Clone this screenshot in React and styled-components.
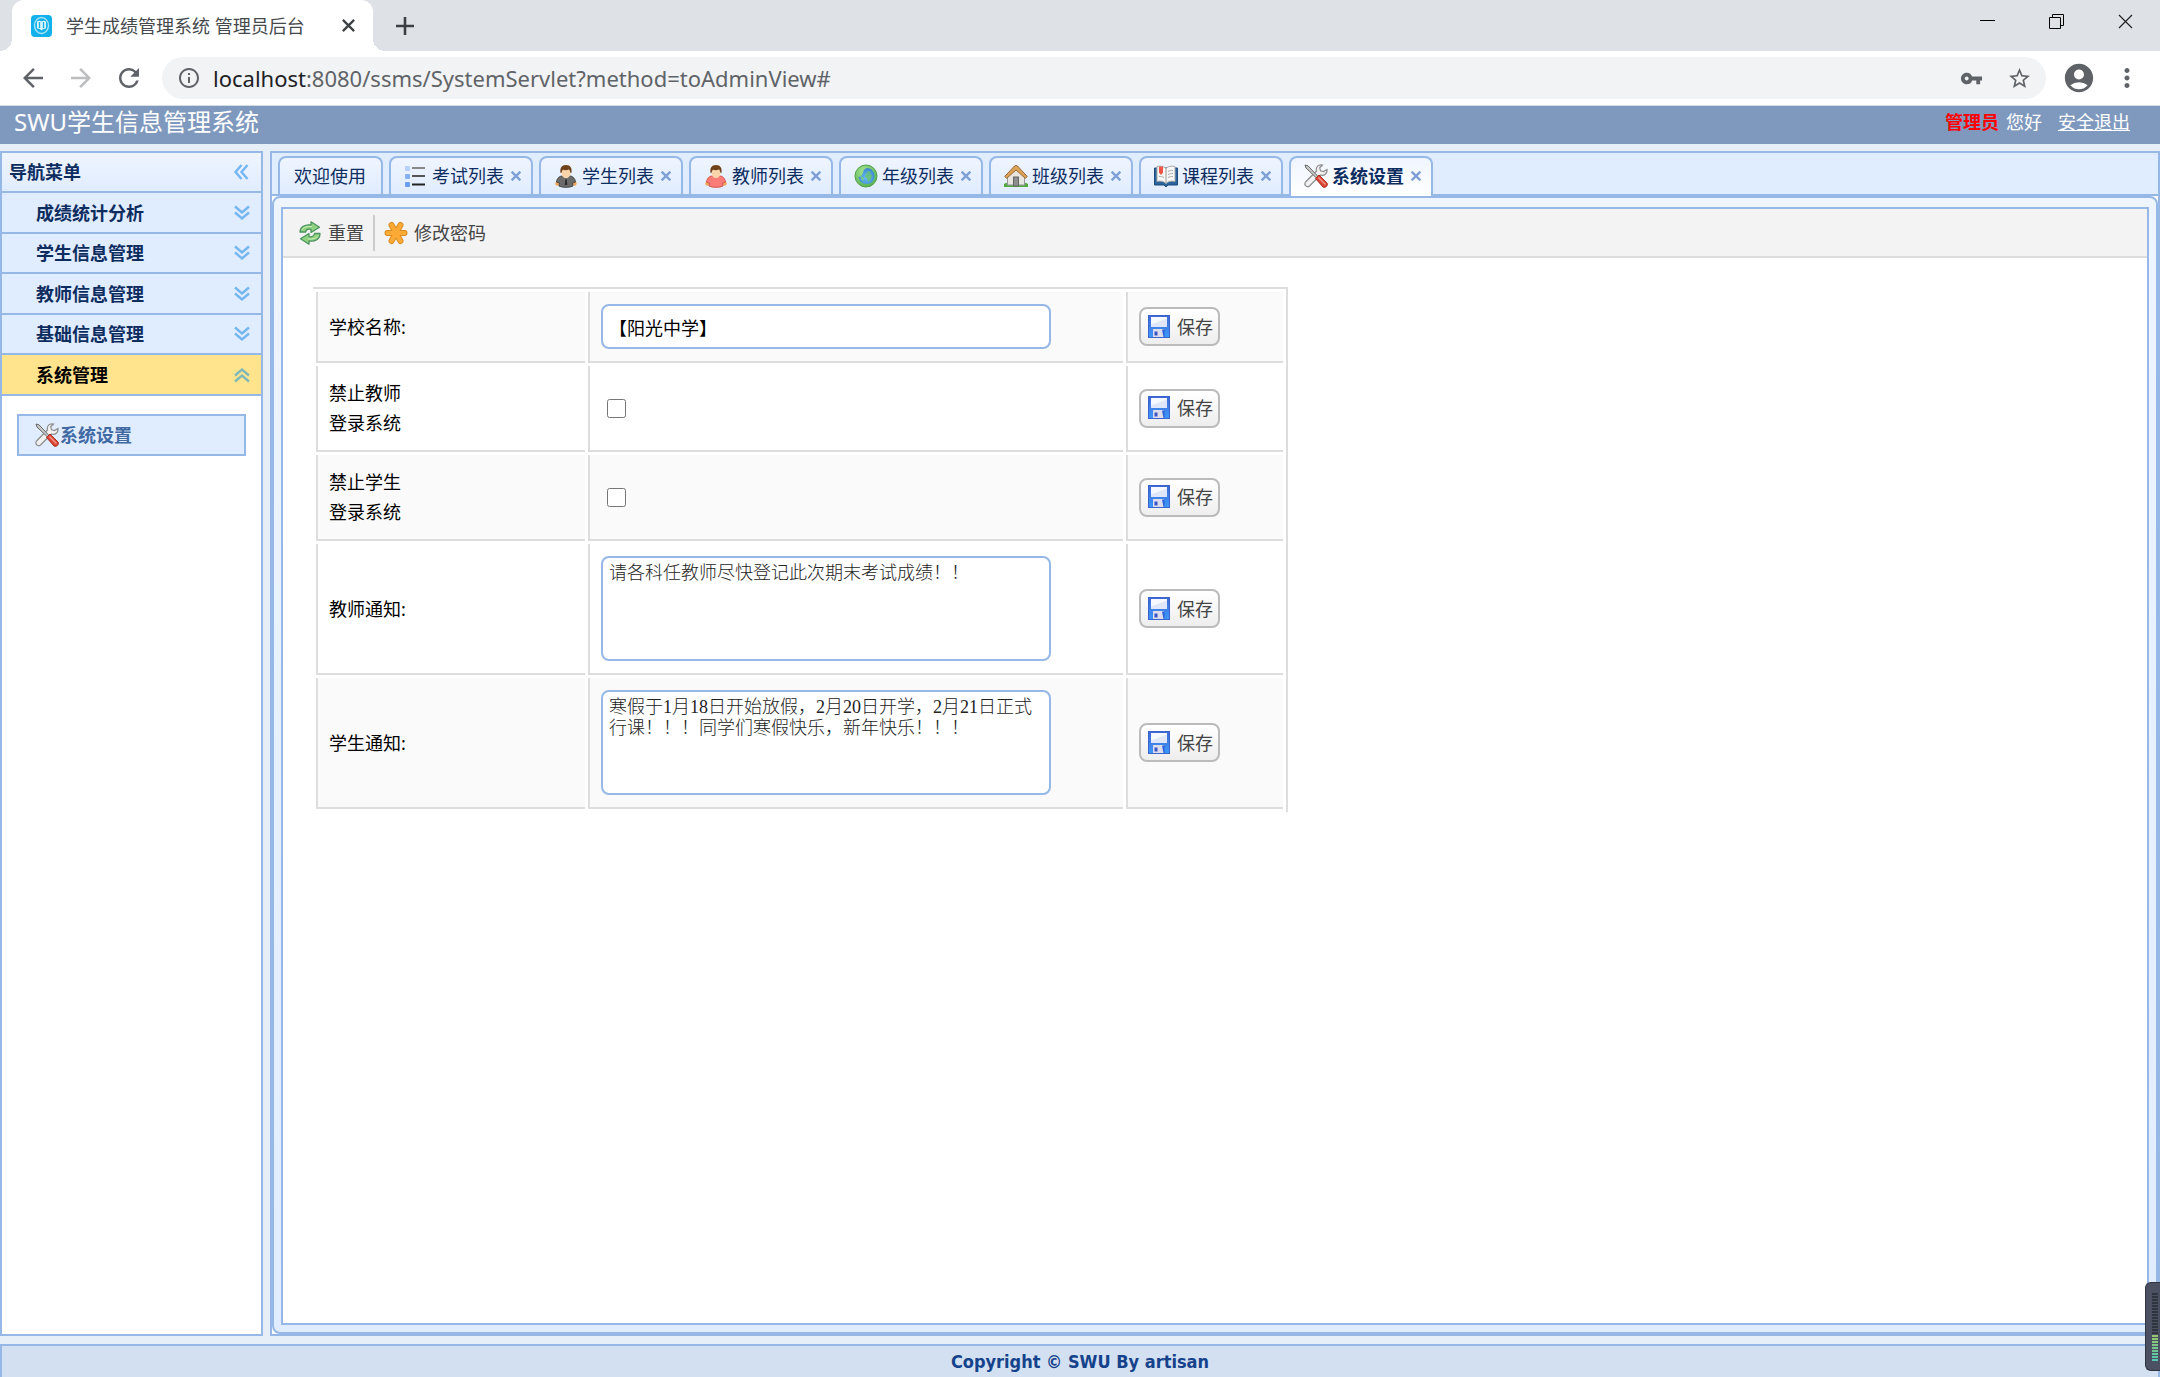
import styled, { createGlobalStyle, css } from "styled-components";
import {
  MdAccountCircle,
  MdArrowBack,
  MdArrowForward,
  MdInfoOutline,
  MdMoreVert,
  MdRefresh,
  MdStarBorder,
  MdVpnKey,
} from "react-icons/md";

const GlobalStyle = createGlobalStyle`
  :root {
    --line: #95b8e7;
    --blue-bg: #e0ecff;
    --blue-top: #eff5ff;
    --navy: #0e2d5f;
    --grey-line: #dddddd;
    --chrome-icon: #5f6368;
  }
  *, *::before, *::after {
    box-sizing: border-box;
  }
  body {
    margin: 0;
    font: 18px/24px "Noto Sans", "Noto Sans CJK SC", sans-serif;
    color: #000;
  }
  button {
    margin: 0;
    padding: 0;
    border: 0;
    background: none;
    font: inherit;
    color: inherit;
  }
  svg {
    display: block;
    flex: none;
  }
`;

const Page = styled.div`
  display: flex;
  flex-direction: column;
  height: 100vh;
  min-height: 860px;
  background: #e6eef8;
`;

/* browser window */

const TitleBar = styled.div`
  display: flex;
  justify-content: space-between;
  height: 51px;
  padding-left: 12px;
  background: #dee1e6;
`;

const TabStrip = styled.div`
  display: flex;
  align-items: center;
`;

const BrowserTab = styled.div`
  position: relative;
  display: flex;
  align-items: center;
  width: 361px;
  height: 51px;
  padding: 0 17px 0 19px;
  border-radius: 12px 12px 0 0;
  background: #fff;
  color: #45494d;
  &::before,
  &::after {
    content: "";
    position: absolute;
    bottom: 0;
    width: 12px;
    height: 12px;
  }
  &::before {
    right: 100%;
    background: radial-gradient(circle at 0 0, #dee1e6 12px, #fff 12px);
  }
  &::after {
    left: 100%;
    background: radial-gradient(circle at 100% 0, #dee1e6 12px, #fff 12px);
  }
  .title {
    flex: 1;
    margin-left: 14px;
    white-space: nowrap;
  }
`;

const ChromeButton = styled.button`
  display: flex;
  align-items: center;
  justify-content: center;
  width: ${({ $size }) => $size || 30}px;
  height: 30px;
  color: ${({ $faded }) => ($faded ? "#bbbdbf" : "var(--chrome-icon)")};
`;

const NewTabButton = styled(ChromeButton)`
  margin-left: 17px;
`;

const WindowButtons = styled.div`
  display: flex;
  height: 43px;
  button {
    display: flex;
    align-items: center;
    justify-content: center;
    width: 69px;
  }
`;

const AddressBar = styled.div`
  display: flex;
  align-items: center;
  height: 55px;
  padding: 0 18px;
  border-bottom: 1px solid #d6dce4;
  background: #fff;
`;

const NavButtons = styled.div`
  display: flex;
  gap: 18px;
  margin-right: 18px;
`;

const Omnibox = styled.div`
  display: flex;
  flex: 1;
  align-items: center;
  gap: 12px;
  height: 42px;
  margin-right: 16px;
  padding: 0 12px 0 15px;
  border-radius: 21px;
  background: #f1f3f4;
  color: var(--chrome-icon);
  .url {
    flex: 1;
    font: 22px/30px "Noto Sans", sans-serif;
  }
  .host {
    color: #202124;
  }
`;

const OmniboxActions = styled.div`
  display: flex;
  gap: 18px;
`;

const ProfileButtons = styled.div`
  display: flex;
  gap: 16px;
`;

/* page header and footer */

const Header = styled.header`
  display: flex;
  justify-content: space-between;
  height: 38px;
  padding: 0 30px 0 14px;
  background: #7f99be;
  color: #fff;
  h1 {
    margin: 0;
    font-size: 24px;
    line-height: 32px;
    font-weight: 400;
  }
`;

const UserInfo = styled.div`
  line-height: 32px;
  strong {
    margin-right: 7px;
    color: #f00;
  }
  a {
    margin-left: 16px;
    color: #fff;
  }
`;

const Footer = styled.footer`
  height: 33px;
  border: 2px solid var(--line);
  border-bottom: 0;
  background: #d2e0f2;
  color: #15428b;
  font: bold 18px/32px "DejaVu Sans Condensed", "DejaVu Sans", sans-serif;
  text-align: center;
`;

const Layout = styled.div`
  display: flex;
  flex: 1;
  gap: 7px;
  min-height: 0;
  padding: 7px 0 8px;
`;

/* navigation */

const Sidebar = styled.nav`
  width: 263px;
  border: 2px solid var(--line);
  background: #fff;
`;

const SidebarTitle = styled.div`
  display: flex;
  align-items: center;
  justify-content: space-between;
  height: 40px;
  padding: 0 12px 0 7px;
  border-bottom: 2px solid var(--line);
  background: linear-gradient(var(--blue-top), var(--blue-bg));
  color: var(--navy);
  font-weight: bold;
`;

const MenuHeader = styled.button`
  display: flex;
  align-items: center;
  justify-content: space-between;
  width: 100%;
  height: 41px;
  padding: 0 11px 0 34px;
  border-bottom: 2px solid var(--line);
  background: ${({ $active }) => ($active ? "#ffe48d" : "var(--blue-bg)")};
  color: ${({ $active }) => ($active ? "#000" : "var(--navy)")};
  font-weight: bold;
  &:nth-of-type(even) {
    height: 40px;
  }
`;

const MenuItem = styled.a`
  display: flex;
  align-items: center;
  gap: 1px;
  height: 42px;
  margin: 18px 15px;
  padding-left: 16px;
  border: 2px solid var(--line);
  background: var(--blue-bg);
  color: #416aa3;
  font-weight: bold;
  text-decoration: none;
`;

/* tabs */

const Main = styled.main`
  display: flex;
  flex: 1;
  flex-direction: column;
  min-width: 0;
  border: 2px solid var(--line);
  background: #fff;
`;

const TabHeader = styled.div`
  display: flex;
  gap: 6px;
  height: 43px;
  padding: 3px 6px 0;
  border-bottom: 2px solid var(--line);
  background: var(--blue-bg);
`;

const Tab = styled.div`
  display: flex;
  align-items: center;
  height: 38px;
  padding: 0 ${({ $closable }) => ($closable ? "5px 0 13px" : "15px 0 14px")};
  border: 2px solid var(--line);
  border-bottom: 0;
  border-radius: 8px 8px 0 0;
  background: linear-gradient(var(--blue-top), var(--blue-bg));
  color: var(--navy);
  white-space: nowrap;
  .label {
    display: flex;
    align-items: center;
    gap: 4px;
  }
  .close {
    display: flex;
    align-items: center;
    justify-content: center;
    width: 20px;
    height: 20px;
    margin-left: 2px;
  }
  ${({ $active }) =>
    $active &&
    css`
      height: 40px;
      padding-bottom: 2px;
      background: linear-gradient(var(--blue-top), #fff);
      font-weight: bold;
    `}
`;

const TabPanel = styled.div`
  display: flex;
  flex: 1;
  min-height: 0;
  padding: 9px 7px 7px;
  border: 2px solid var(--line);
  border-radius: 8px;
  background: linear-gradient(var(--blue-top), var(--blue-bg));
`;

const Content = styled.section`
  flex: 1;
  border: 2px solid var(--line);
  background: #fff;
`;

const Toolbar = styled.div`
  display: flex;
  align-items: center;
  height: 49px;
  padding-left: 15px;
  border-bottom: 2px solid var(--grey-line);
  background: #f3f3f3;
`;

const ToolButton = styled.button`
  display: flex;
  align-items: center;
  gap: 6px;
  color: #444;
`;

const Separator = styled.div`
  width: 2px;
  height: 36px;
  margin: 0 9px;
  background: #ccc;
`;

/* settings form */

const SettingsTable = styled.table`
  width: 975px;
  margin: 29px 30px;
  border: 0 solid var(--grey-line);
  border-width: 2px 2px 0 0;
  border-collapse: separate;
  border-spacing: 3px;
  table-layout: fixed;
  th,
  td {
    padding: 12px 11px;
    border: 0 solid var(--grey-line);
    border-width: 0 0 2px 2px;
    font-weight: 400;
    text-align: left;
    line-height: 30px;
    white-space: pre-line;
  }
  tr:nth-child(odd) {
    background: #fafafa;
  }
  .name {
    width: 269px;
  }
  .action {
    width: 157px;
  }
`;

const field = css`
  display: block;
  width: 450px;
  border: 2px solid var(--line);
  border-radius: 8px;
  background: #fff;
  outline: 0;
`;

const TextInput = styled.input`
  ${field}
  height: 45px;
  padding: 0 6px;
  font: 18px/24px "Noto Sans", "Noto Sans CJK SC", sans-serif;
`;

const NoticeArea = styled.textarea`
  ${field}
  height: 105px;
  padding: 5px 6px;
  color: #222;
  font: 300 18px/21px "Liberation Serif", "Noto Sans CJK SC", serif;
  resize: none;
`;

const Checkbox = styled.input`
  display: block;
  width: 19px;
  height: 19px;
  margin: 0 6px;
`;

const SaveButton = styled.button`
  display: flex;
  align-items: center;
  gap: 6px;
  height: 39px;
  padding: 0 5px 0 6px;
  border: 2px solid #bbb;
  border-radius: 8px;
  background: linear-gradient(#fff, #eee);
  color: #444;
`;

const VolumeMeter = styled.div`
  position: fixed;
  right: 0;
  bottom: 6px;
  width: 15px;
  height: 89px;
  padding: 10px 2px 0 6px;
  border: 1px solid #30343f;
  border-right: 0;
  border-radius: 6px 0 0 6px;
  background: #4b5163;
  .off,
  .on {
    height: 42px;
    background: repeating-linear-gradient(#30343f 0 2px, #4b5163 2px 3px);
  }
  .on {
    height: 27px;
    background: repeating-linear-gradient(transparent 0 2px, #4b5163 2px 3px),
      linear-gradient(#9ac66b, #4fc9b5);
  }
`;

/* icons */

const FaviconIcon = () => (
  <svg width="21" height="22" viewBox="0 0 21 22">
    <rect width="21" height="22" rx="4" fill="#12b1ec" />
    <ellipse cx="10.5" cy="10.5" rx="7" ry="8" fill="none" stroke="#a9e4f9" strokeWidth="1.4" />
    <path d="M6 6.5c1.500-1 3-1 4.500 0 1.500-1 3-1 4.500 0v7c-1.500 0-3 .5-4.500 2-1.500-1.500-3-2-4.500-2z" fill="#d8f4fd" />
    <path d="M8.500 7v6M12.500 7v6" stroke="#12b1ec" strokeWidth="1.300" />
  </svg>
);

const CrossIcon = ({ size, color, width }) => (
  <svg width={size} height={size} viewBox="0 0 15 15">
    <path d="M1 1l13 13M14 1L1 14" stroke={color} strokeWidth={width} />
  </svg>
);

const PlusIcon = () => (
  <svg width="18" height="18" viewBox="0 0 18 18">
    <path d="M9 0v18M0 9h18" stroke="#3c4043" strokeWidth="2.6" />
  </svg>
);

const MinimizeIcon = () => (
  <svg width="15" height="15" viewBox="0 0 15 15">
    <path d="M0 6.5h15" stroke="#000" />
  </svg>
);

const RestoreIcon = () => (
  <svg width="15" height="15" viewBox="0 0 15 15">
    <path d="M.5 3.5h11v11H.5zM3.5 3.5v-3h11v11h-3" fill="none" stroke="#000" />
  </svg>
);

const rotations = { down: 0, left: 90, up: 180 };

const ChevronsIcon = ({ to }) => (
  <svg width="16" height="16" viewBox="0 0 16 16">
    <g
      transform={`rotate(${rotations[to]} 8 8)`}
      fill="none"
      stroke={to === "up" ? "#7fb8b8" : "#74b6f0"}
      strokeWidth="2.4"
    >
      <path d="M1 1.5l7 6 7-6M1 7.5l7 6 7-6" />
    </g>
  </svg>
);

const ListIcon = () => (
  <svg width="24" height="24" viewBox="0 0 24 24">
    <rect x="1" y="2" width="5" height="5" rx="1" fill="#b5d0fb" />
    <rect x="1" y="10" width="5" height="5" rx="1" fill="#86b0f3" />
    <rect x="1" y="18" width="5" height="5" rx="1" fill="#6a9df0" />
    <path d="M8 4h13" stroke="#888" strokeWidth="2" />
    <path d="M8 12h13" stroke="#555" strokeWidth="2" />
    <path d="M8 20.500h13" stroke="#222" strokeWidth="2" />
  </svg>
);

const PersonIcon = ({ body, edge, tie }) => (
  <svg width="24" height="24" viewBox="0 0 24 24">
    <circle cx="3.500" cy="19.500" r="2.200" fill="#f0a558" />
    <circle cx="20.500" cy="19.500" r="2.200" fill="#f0a558" />
    <path
      d="M2.500 18c.5-3.500 2.500-6 6-6h7c3.500 0 5.500 2.500 6 6l-3 1 .5 3c-3 1.800-11 1.800-14 0l.5-3z"
      fill={body}
      stroke={edge}
    />
    {tie && <path d="M9.500 12h5L12 16z" fill="#d9d9d9" />}
    {tie && <path d="M11.500 14h1l.8 7h-2.600z" fill="#2c2c2c" />}
    <path d="M7.500 6h9v3.500c0 2.500-2 4.500-4.500 4.500s-4.500-2-4.500-4.500z" fill="#f9d4ab" />
    <path
      d="M6.500 9C5.800 4 7.500 1 12 1s6.200 3 5.500 8l-1.300-.5c0-1.500-.5-2.500-1.200-3-2 .8-4.500.8-6 .2-.8.8-1.200 1.500-1.200 2.800z"
      fill="#70421a"
    />
  </svg>
);

const GlobeIcon = () => (
  <svg width="24" height="24" viewBox="0 0 24 24">
    <defs>
      <radialGradient id="land" cx=".4" cy=".3" r=".8">
        <stop offset="0" stopColor="#a4e491" />
        <stop offset="1" stopColor="#4fae4a" />
      </radialGradient>
      <radialGradient id="sea" cx=".5" cy=".6" r=".6">
        <stop offset="0" stopColor="#69bff8" />
        <stop offset="1" stopColor="#3b86cc" />
      </radialGradient>
    </defs>
    <circle cx="12" cy="12" r="11" fill="url(#land)" stroke="#53a04c" />
    <path
      d="M13 4c4 0 7.500 3.500 7.500 8s-3 8-8 8c-4.500 0-7.500-3-8-7 2 0 3-1 4-3 1-3 1-5 4.500-6z"
      fill="url(#sea)"
    />
    <path d="M14 7l3 1-1 2 2 1-1 4-3 3-1-4-2-1 1-3z" fill="#6cc36a" opacity=".8" />
    <path d="M7 12l3 2-1 3-2-2z" fill="#7fd07a" opacity=".8" />
  </svg>
);

const HouseIcon = () => (
  <svg width="24" height="24" viewBox="0 0 24 24">
    <path d="M0 23v-3c4-3 20-3 24 0v3z" fill="#55a842" />
    <path d="M3.500 12L12 4l8.500 8v9h-17z" fill="#e9e5df" stroke="#999" />
    <rect x="9.500" y="13" width="5" height="9" fill="#8e8e8e" stroke="#666" />
    <path
      d="M.7 12.500L10.500 2q1.500-1.300 3 0l9.800 10.500-2 1.800L12 6l-9.300 8.300z"
      fill="#dca259"
      stroke="#9c6b2f"
    />
  </svg>
);

const BookIcon = () => (
  <svg width="24" height="24" viewBox="0 0 24 24">
    <path d="M.5 4h23v17H14l-2 2-2-2H.5z" fill="#2b659d" stroke="#1c4b7c" />
    <path d="M3 2.500c4-1 7 0 9 2 2-2 5-3 9-2v15c-4-1-7 0-9 2-2-2-5-3-9-2z" fill="#f7f7f5" stroke="#aaa" />
    <path d="M12 4.500v15" stroke="#999" />
    <path
      d="M14 7.500c2-1 3-1 5-1M14 10.500c2-1 3-1 5-1M14 13.500c2-1 3-1 5-1M5 12.500c2 0 3 0 5 1"
      stroke="#aaa"
      fill="none"
    />
    <path d="M5 2.500h4v6L7 11 5 8.500z" fill="#ee5345" />
  </svg>
);

const ToolsIcon = () => (
  <svg width="24" height="24" viewBox="0 0 24 24">
    <path
      d="M23 5.500l-3.500 2-3-.7-.8-3L18.500 1c-4-1-7 2-6 6L1.500 18c-2 3 1.500 6 4 4L16.500 11c3.500 1.500 7-1.500 6.500-5.500z"
      fill="#f1f1f1"
      stroke="#8c8c8c"
      strokeWidth="1.200"
    />
    <path d="M1 1l3 .8 10 10.700-1.500 1.500L2 4z" fill="#c9c9c9" stroke="#686868" />
    <path
      d="M11.500 14.500l3.500-3.500 8 8c1.500 2-1.500 5.500-4 4z"
      fill="#dc4433"
      stroke="#a82d21"
    />
    <path d="M14.500 13.500l7 7" stroke="#f29488" strokeWidth="1.500" />
  </svg>
);

const ResetIcon = () => (
  <svg width="24" height="24" viewBox="0 0 24 24">
    <g fill="#8fd27f" stroke="#4d9361" strokeWidth="1.300" strokeLinejoin="round">
      <path d="M2 11c0-5 5-8 11-7V.8l8.500 5.400L13 11.500V8.300c-3-.6-5 .4-5.500 2.700z" />
      <path d="M22 12.500c0 5.500-5 8.500-11 7.500v3.200l-8.500-5.400L11 12.500v3.200c3 .6 5-.6 5.500-3.200z" />
    </g>
    <path d="M4 9c1-2.500 5-4 10-3.500M20 14.500c-1 2.500-5 4-10 3.500" stroke="#c9f0bb" fill="none" />
  </svg>
);

const AsteriskIcon = () => (
  <svg width="24" height="24" viewBox="0 0 24 24">
    <g stroke="#d98a1e" strokeWidth="6" strokeLinecap="round">
      <path d="M3.500 12h17M7.500 4l9 16M16.500 4l-9 16" />
    </g>
    <g stroke="#fbaa35" strokeWidth="4.200" strokeLinecap="round">
      <path d="M3.500 12h17M7.500 4l9 16M16.500 4l-9 16" />
    </g>
  </svg>
);

const DiskIcon = () => (
  <svg width="24" height="24" viewBox="0 0 24 24">
    <defs>
      <linearGradient id="disk" x1="0" x2="0" y1="0" y2="1">
        <stop offset="0" stopColor="#3f68d4" />
        <stop offset="1" stopColor="#3d97fb" />
      </linearGradient>
    </defs>
    <rect x="1.500" y="0.500" width="21" height="22" fill="url(#disk)" stroke="#3a63cc" />
    <rect x="4" y="2" width="16" height="10" fill="#f5f8ff" />
    <path d="M4 9.500l16-6V12H4z" fill="#dfe6fa" />
    <rect x="6" y="14" width="11" height="8" fill="#dcdcec" />
    <rect x="7.500" y="16.500" width="3" height="4" fill="#3a55c8" />
    <path d="M15 14.500h2.500V22h-1z" fill="#2b62d8" />
  </svg>
);

const menus = ["成绩统计分析", "学生信息管理", "教师信息管理", "基础信息管理", "系统管理"];

const tabs = [
  { title: "欢迎使用" },
  { title: "考试列表", icon: <ListIcon /> },
  { title: "学生列表", icon: <PersonIcon body="#6b6b6b" edge="#4a4a4a" tie /> },
  { title: "教师列表", icon: <PersonIcon body="#fb7b76" edge="#d65552" /> },
  { title: "年级列表", icon: <GlobeIcon /> },
  { title: "班级列表", icon: <HouseIcon /> },
  { title: "课程列表", icon: <BookIcon /> },
  { title: "系统设置", icon: <ToolsIcon />, active: true },
];

const settings = [
  {
    id: "schoolName",
    label: "学校名称:",
    control: <TextInput id="schoolName" defaultValue="【阳光中学】" />,
  },
  {
    id: "forbidTeacher",
    label: "禁止教师\n登录系统",
    control: <Checkbox id="forbidTeacher" type="checkbox" />,
  },
  {
    id: "forbidStudent",
    label: "禁止学生\n登录系统",
    control: <Checkbox id="forbidStudent" type="checkbox" />,
  },
  {
    id: "noticeTeacher",
    label: "教师通知:",
    control: (
      <NoticeArea
        id="noticeTeacher"
        spellCheck={false}
        defaultValue="请各科任教师尽快登记此次期末考试成绩！！"
      />
    ),
  },
  {
    id: "noticeStudent",
    label: "学生通知:",
    control: (
      <NoticeArea
        id="noticeStudent"
        spellCheck={false}
        defaultValue="寒假于1月18日开始放假，2月20日开学，2月21日正式行课！！！同学们寒假快乐，新年快乐！！！"
      />
    ),
  },
];

function BrowserChrome() {
  return (
    <>
      <TitleBar>
        <TabStrip>
          <BrowserTab>
            <FaviconIcon />
            <span className="title">学生成绩管理系统 管理员后台</span>
            <ChromeButton $size={16} aria-label="关闭标签页">
              <CrossIcon size={13} color="#3c4043" width="2.6" />
            </ChromeButton>
          </BrowserTab>
          <NewTabButton aria-label="新标签页">
            <PlusIcon />
          </NewTabButton>
        </TabStrip>
        <WindowButtons>
          <button aria-label="最小化">
            <MinimizeIcon />
          </button>
          <button aria-label="还原">
            <RestoreIcon />
          </button>
          <button aria-label="关闭">
            <CrossIcon size={15} color="#222" width="1.2" />
          </button>
        </WindowButtons>
      </TitleBar>
      <AddressBar>
        <NavButtons>
          <ChromeButton aria-label="后退">
            <MdArrowBack size={30} />
          </ChromeButton>
          <ChromeButton $faded aria-label="前进">
            <MdArrowForward size={30} />
          </ChromeButton>
          <ChromeButton aria-label="刷新">
            <MdRefresh size={30} />
          </ChromeButton>
        </NavButtons>
        <Omnibox>
          <MdInfoOutline size={24} />
          <span className="url">
            <span className="host">localhost</span>
            :8080/ssms/SystemServlet?method=toAdminView#
          </span>
          <OmniboxActions>
            <ChromeButton aria-label="密码">
              <MdVpnKey size={23} />
            </ChromeButton>
            <ChromeButton aria-label="收藏">
              <MdStarBorder size={25} />
            </ChromeButton>
          </OmniboxActions>
        </Omnibox>
        <ProfileButtons>
          <ChromeButton $size={34} aria-label="用户">
            <MdAccountCircle size={34} />
          </ChromeButton>
          <ChromeButton aria-label="更多">
            <MdMoreVert size={30} />
          </ChromeButton>
        </ProfileButtons>
      </AddressBar>
    </>
  );
}

function SideMenu() {
  return (
    <Sidebar>
      <SidebarTitle>
        导航菜单
        <ChevronsIcon to="left" />
      </SidebarTitle>
      {menus.map((menu, i) => {
        const active = i === menus.length - 1;
        return (
          <MenuHeader key={menu} $active={active}>
            {menu}
            <ChevronsIcon to={active ? "up" : "down"} />
          </MenuHeader>
        );
      })}
      <MenuItem href="#">
        <ToolsIcon />
        系统设置
      </MenuItem>
    </Sidebar>
  );
}

function SettingsForm() {
  return (
    <SettingsTable>
      <colgroup>
        <col className="name" />
        <col />
        <col className="action" />
      </colgroup>
      <tbody>
        {settings.map(({ id, label, control }) => (
          <tr key={id}>
            <th scope="row">
              <label htmlFor={id}>{label}</label>
            </th>
            <td>{control}</td>
            <td>
              <SaveButton>
                <DiskIcon />
                保存
              </SaveButton>
            </td>
          </tr>
        ))}
      </tbody>
    </SettingsTable>
  );
}

function App() {
  return (
    <Page>
      <GlobalStyle />
      <BrowserChrome />
      <Header>
        <h1>SWU学生信息管理系统</h1>
        <UserInfo>
          <strong>管理员</strong>
          您好
          <a href="#">安全退出</a>
        </UserInfo>
      </Header>
      <Layout>
        <SideMenu />
        <Main>
          <TabHeader>
            {tabs.map(({ title, icon, active }) => (
              <Tab key={title} $active={active} $closable={!!icon}>
                <button className="label">
                  {icon}
                  {title}
                </button>
                {icon && (
                  <button className="close" aria-label={`关闭${title}`}>
                    <CrossIcon size={10} color="#7fa0d6" width="3.6" />
                  </button>
                )}
              </Tab>
            ))}
          </TabHeader>
          <TabPanel>
            <Content>
              <Toolbar>
                <ToolButton>
                  <ResetIcon />
                  重置
                </ToolButton>
                <Separator />
                <ToolButton>
                  <AsteriskIcon />
                  修改密码
                </ToolButton>
              </Toolbar>
              <SettingsForm />
            </Content>
          </TabPanel>
        </Main>
      </Layout>
      <Footer>Copyright © SWU By artisan</Footer>
      <VolumeMeter>
        <div className="off" />
        <div className="on" />
      </VolumeMeter>
    </Page>
  );
}

export default App;
